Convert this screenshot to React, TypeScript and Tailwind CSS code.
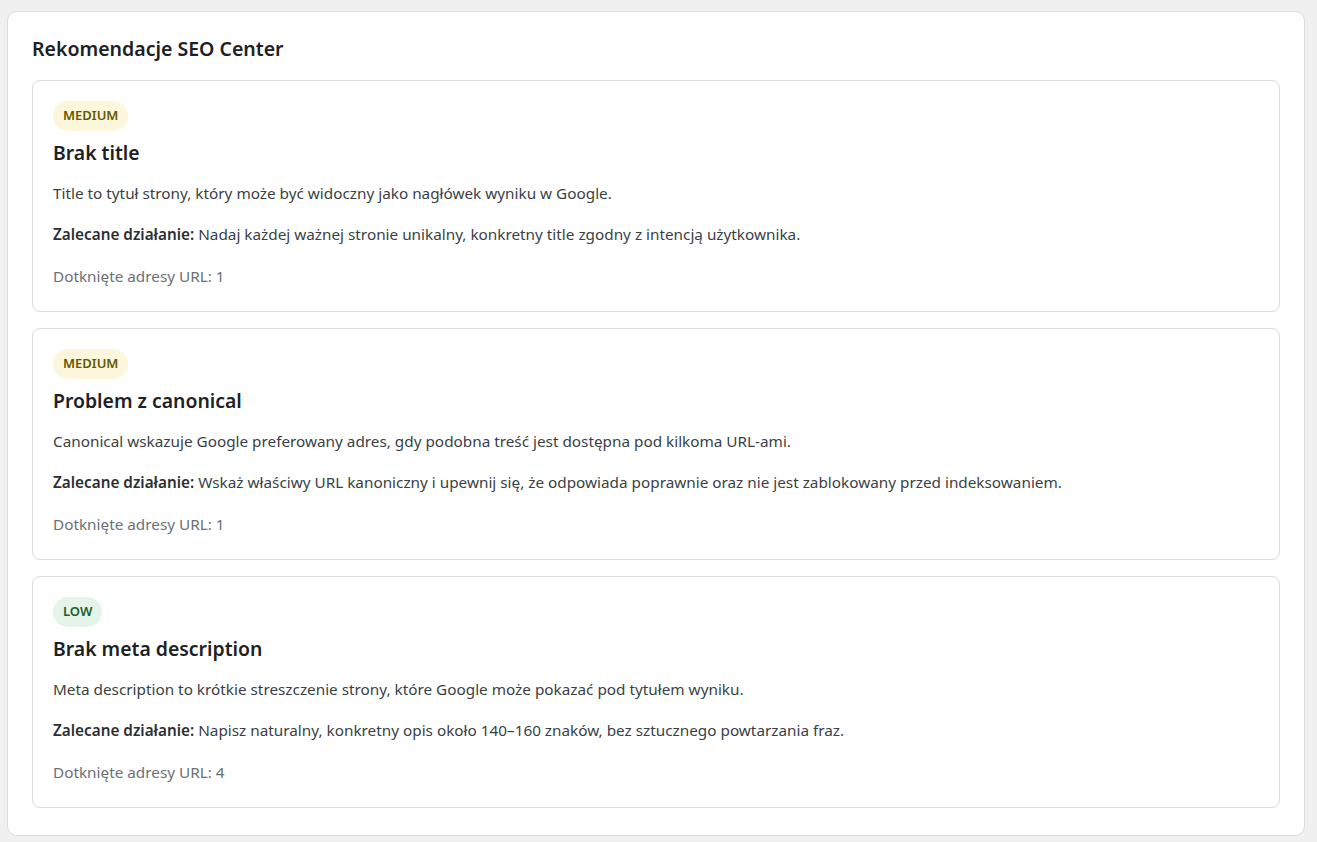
const items = [
  {
    level: "MEDIUM",
    title: "Brak title",
    description: "Title to tytuł strony, który może być widoczny jako nagłówek wyniku w Google.",
    action: "Nadaj każdej ważnej stronie unikalny, konkretny title zgodny z intencją użytkownika.",
    urls: 1,
  },
  {
    level: "MEDIUM",
    title: "Problem z canonical",
    description: "Canonical wskazuje Google preferowany adres, gdy podobna treść jest dostępna pod kilkoma URL-ami.",
    action: "Wskaż właściwy URL kanoniczny i upewnij się, że odpowiada poprawnie oraz nie jest zablokowany przed indeksowaniem.",
    urls: 1,
  },
  {
    level: "LOW",
    title: "Brak meta description",
    description: "Meta description to krótkie streszczenie strony, które Google może pokazać pod tytułem wyniku.",
    action: "Napisz naturalny, konkretny opis około 140–160 znaków, bez sztucznego powtarzania fraz.",
    urls: 4,
  },
]

function Badge({ level }: { level: string }) {
  const cls =
    level === "LOW" ? "bg-[#e5f4e8] text-[#1b5e2b]" : "bg-[#fcf6dc] text-[#665800]"
  return (
    <div className="flex">
      <span className={`flex h-[30px] items-center rounded-full px-[10px] text-[13px] font-semibold ${cls}`}>
        {level}
      </span>
    </div>
  )
}

export default function App() {
  return (
    <div className="min-h-screen bg-[#f0f0f0] pl-[7px] pr-[12px] pt-[11px] pb-[8px] font-['Noto_Sans',sans-serif]">
      <div className="rounded-[10px] border border-[#dcdcdc] bg-white px-6 pt-6 pb-[27px]">
        <h2 className="text-[19.5px] font-semibold leading-[26px] text-[#1d2125]">Rekomendacje SEO Center</h2>
        <div className="mt-[18px] flex flex-col gap-4">
          {items.map((item) => (
            <div key={item.title} className="rounded-[8px] border border-[#dcdcdc] px-5 pt-5 pb-[23px]">
              <Badge level={item.level} />
              <h3 className="mt-[8px] text-[19.4px] font-semibold leading-[28px] text-[#1d2125]">{item.title}</h3>
              <p className="mt-[14px] text-[15.3px] leading-[24px] text-[#3a3f45]">{item.description}</p>
              <p className="mt-[17px] text-[15.3px] leading-[24px] text-[#3a3f45]">
                <strong className="font-semibold text-[#2b2f33]">Zalecane działanie:</strong> {item.action}
              </p>
              <p className="mt-[18px] text-[15.3px] leading-[24px] text-[#6b7075]">Dotknięte adresy URL: {item.urls}</p>
            </div>
          ))}
        </div>
      </div>
    </div>
  )
}
